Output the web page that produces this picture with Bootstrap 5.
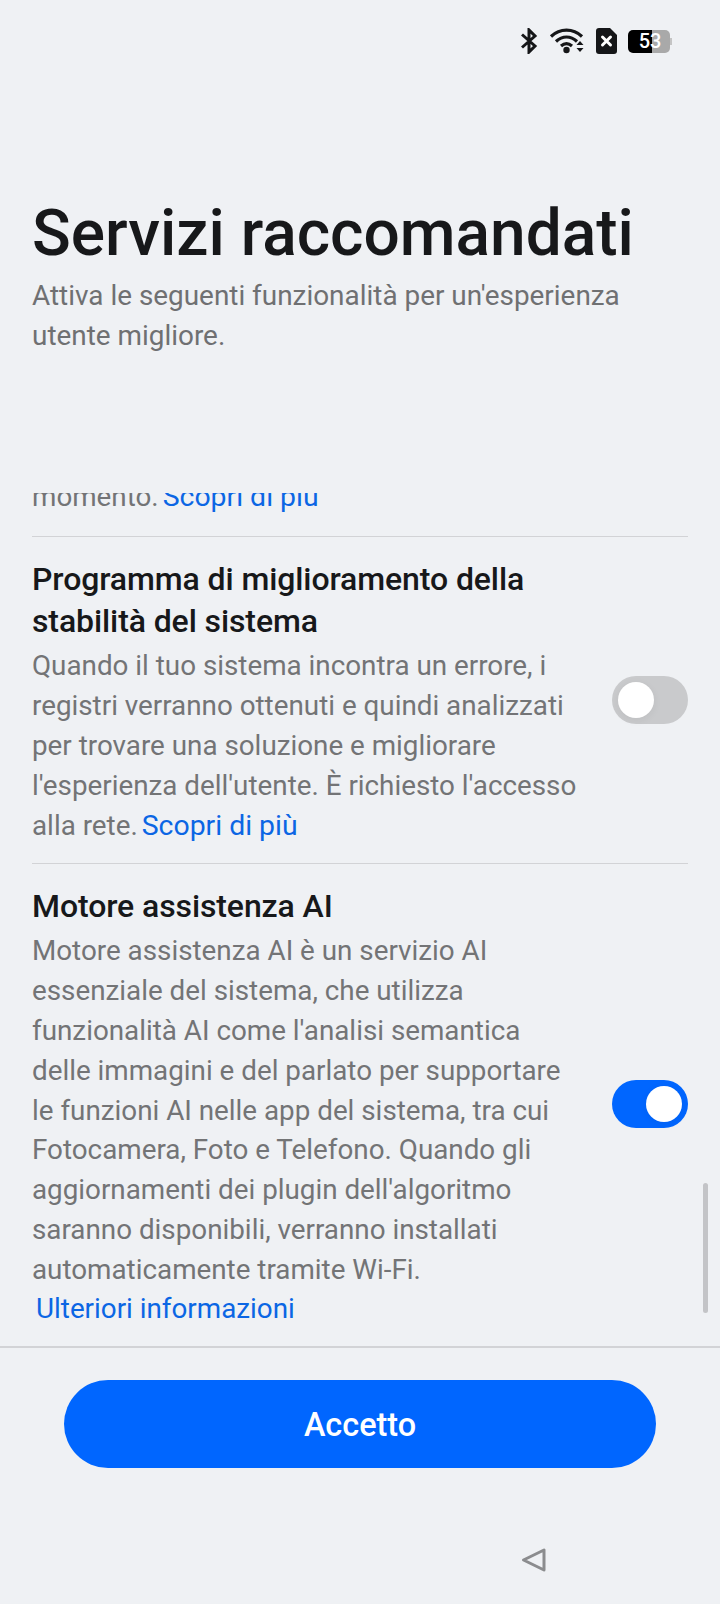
<!DOCTYPE html>
<html lang="it">
<head>
<meta charset="utf-8">
<title>Servizi raccomandati</title>
<link href="https://cdn.jsdelivr.net/npm/bootstrap@5.3.0/dist/css/bootstrap.min.css" rel="stylesheet">
<style>
html,body{height:100%;}
body{background:#eff1f4;font-family:Roboto,"Noto Sans",sans-serif;color:#151618;}
.screen{width:720px;height:1604px;overflow:hidden;}
.statusbar{height:82px;padding:28px 48px 0 0;gap:11px;}
.statusbar svg{display:block;}
.battery-wrap{position:relative;width:44px;height:23px;margin-top:2px;}
.battery-text{position:absolute;inset:0;font-size:20px;line-height:23px;text-align:center;font-weight:500;color:#fff;}
.heading-block{padding:114px 32px 0;height:411px;flex:none;}
.page-title{font-size:64px;font-weight:500;line-height:75px;margin:0;color:#17181a;}
.page-sub{font-size:27.9px;line-height:39.8px;color:#6f7072;margin:5px 0 0;}
.scroller{position:relative;height:853px;overflow:hidden;flex:none;}
.scroll-content{padding:0 32px;}
.item{border-bottom:1px solid #d2d3d6;gap:34px;}
.item-first{padding-bottom:20px;}
.item-middle{padding:21px 0 17px;}
.item-last{padding:21px 0 17px;border-bottom:0;}
.item-name{font-size:32px;font-weight:500;line-height:42px;margin:0;color:#17181a;letter-spacing:-.1px;}
.item-desc{font-size:27.8px;line-height:39.9px;color:#737476;margin:0;}
.link-blue{color:#0b66e4;text-decoration:none;}
.link-gap{margin-left:4px;font-size:28.4px;}
.link-block{display:block;margin:-1px 0 0 4px;}
.toggle-sw{width:76px;height:48px;border-radius:24px;flex:none;position:relative;margin-bottom:5px;}
.toggle-sw::after{content:"";position:absolute;top:6px;width:36px;height:36px;border-radius:50%;background:#fff;box-shadow:0 2px 8px rgba(0,0,0,.06);}
.toggle-off{background:#c9cacc;}
.toggle-off::after{left:6px;}
.toggle-on{background:#0066ff;}
.toggle-on::after{right:6px;}
.scrollthumb{position:absolute;right:12px;bottom:33px;width:5px;height:130px;border-radius:3px;background:#c3c4c7;}
.footer-zone{border-top:2px solid #d2d3d6;flex:none;}
.btn-accept{display:block;width:592px;height:88px;margin:32px auto 0;border-radius:44px;background:#0066ff;color:#fff;font-size:32.4px;font-weight:500;border:0;padding:2px 0 0;}
.nav-zone{padding:78px 172px 0 0;}
</style>
</head>
<body>
<div class="screen d-flex flex-column">
  <div class="statusbar d-flex justify-content-end align-items-start">
    <svg width="18" height="26" viewBox="0 0 18 26" fill="none" stroke="#151618" stroke-width="3"><path d="M2 6.500 15 18 9 24V2l6 6L2 19.500"/></svg>
    <svg width="36" height="26" viewBox="0 0 36 26"><g fill="none" stroke="#151618" stroke-width="3.200"><path d="M2 8.500C11 0 24 0 33 8.500"/><path d="M7 13.500C13.500 7.500 21.500 7.500 28 13.500"/><path d="M12 18C15.500 15 19.500 15 23 18"/></g><circle cx="17.500" cy="22" r="3.200" fill="#151618"/><path d="M27.500 17h7l-3.500-4zM27.500 20h7l-3.500 4z" fill="#151618"/></svg>
    <svg width="21" height="26" viewBox="0 0 21 26"><path d="M3 0h11l7 7v16a3 3 0 0 1-3 3H3a3 3 0 0 1-3-3V3a3 3 0 0 1 3-3z" fill="#151618"/><path d="M6.500 9l8 8m0-8-8 8" stroke="#fff" stroke-width="3" stroke-linecap="round"/></svg>
    <div class="battery-wrap">
      <svg width="44" height="23" viewBox="0 0 44 23" class="position-absolute top-0 start-0"><path d="M24 0h13a5 5 0 0 1 5 5v13a5 5 0 0 1-5 5H24z" fill="#a9a9a9"/><rect x="42" y="8" width="2" height="7" fill="#c4c4c4"/><path d="M5 0h19v23H5a5 5 0 0 1-5-5V5a5 5 0 0 1 5-5z" fill="#000"/></svg>
      <div class="battery-text">53</div>
    </div>
  </div>
  <div class="heading-block">
    <h1 class="page-title">Servizi raccomandati</h1>
    <p class="page-sub">Attiva le seguenti funzionalità per un'esperienza utente migliore.</p>
  </div>
  <div class="scroller d-flex flex-column justify-content-end">
    <div class="scroll-content">
      <div class="item item-first">
        <p class="item-desc">momento.<a class="link-blue link-gap" href="#">Scopri di più</a></p>
      </div>
      <div class="item item-middle d-flex align-items-center">
        <div class="flex-grow-1">
          <h2 class="item-name">Programma di miglioramento della stabilità del sistema</h2>
          <p class="item-desc mt-1">Quando il tuo sistema incontra un errore, i registri verranno ottenuti e quindi analizzati per trovare una soluzione e migliorare l'esperienza dell'utente. È richiesto l'accesso alla rete.<a class="link-blue link-gap" href="#">Scopri di più</a></p>
        </div>
        <div class="toggle-sw toggle-off"></div>
      </div>
      <div class="item item-last d-flex align-items-center">
        <div class="flex-grow-1">
          <h2 class="item-name">Motore assistenza AI</h2>
          <p class="item-desc mt-1">Motore assistenza AI è un servizio AI essenziale del sistema, che utilizza funzionalità AI come l'analisi semantica delle immagini e del parlato per supportare le funzioni AI nelle app del sistema, tra cui Fotocamera, Foto e Telefono. Quando gli aggiornamenti dei plugin dell'algoritmo saranno disponibili, verranno installati automaticamente tramite Wi-Fi.<a class="link-blue link-block" href="#">Ulteriori informazioni</a></p>
        </div>
        <div class="toggle-sw toggle-on"></div>
      </div>
    </div>
    <div class="scrollthumb"></div>
  </div>
  <div class="footer-zone">
    <button class="btn-accept" type="button">Accetto</button>
    <div class="nav-zone d-flex justify-content-end">
      <svg width="28" height="28" viewBox="0 0 28 28" fill="none" stroke="#8b8c8e" stroke-width="3" stroke-linejoin="round"><path d="M3.500 14 24 4v20z"/></svg>
    </div>
  </div>
</div>
<script src="https://cdn.jsdelivr.net/npm/bootstrap@5.3.0/dist/js/bootstrap.bundle.min.js"></script>
</body>
</html>
